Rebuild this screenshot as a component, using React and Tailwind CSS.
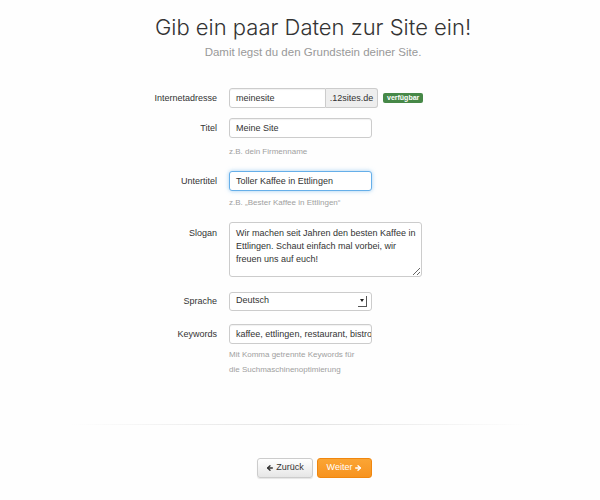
import React from 'react';
import { ArrowLeft, ArrowRight } from 'lucide-react';

const Label = ({ children }) => (
  <div className="w-[217px] shrink-0 text-right text-[9px] leading-[20px] text-[#333]">{children}</div>
);

const Help = ({ children, className = '' }) => (
  <div className={`ml-[229px] text-[8px] text-[#a0a0a0] ${className}`}>{children}</div>
);

const inputCls =
  'h-[20px] rounded-[3px] border border-[#ccc] bg-white px-[6px] text-[9px] leading-[18px] text-[#333] shadow-[inset_0_1px_1px_rgba(0,0,0,0.06)]';

const App = () => {
  return (
    <div className="min-h-[500px] w-[600px] bg-[#fefefe] font-['Liberation_Sans',Arial,sans-serif]">
      <div className="pl-[26px] pt-[12px] text-center">
        <h1 className="font-['Inter',sans-serif] text-[22px] font-light leading-[30px] text-[#333]">
          Gib ein paar Daten zur Site ein!
        </h1>
        <p className="mt-[2px] text-[11.5px] leading-[16px] text-[#999]">
          Damit legst du den Grundstein deiner Site.
        </p>
      </div>

      <div className="mt-[28px]">
        <div className="flex items-center">
          <Label>Internetadresse</Label>
          <div className="ml-[12px] flex">
            <div className={`${inputCls} w-[97px] rounded-r-none`}>meinesite</div>
            <div className="h-[20px] w-[52px] rounded-r-[3px] border border-l-0 border-[#ccc] bg-[#eee] text-center text-[9px] leading-[18px] text-[#333]">
              .12sites.de
            </div>
          </div>
          <span className="ml-[5px] rounded-[2px] bg-[#468847] px-[4px] text-[7px] font-bold leading-[10px] text-white">
            verfügbar
          </span>
        </div>

        <div className="mt-[10px] flex items-center">
          <Label>Titel</Label>
          <div className={`${inputCls} ml-[12px] w-[143px]`}>Meine Site</div>
        </div>
        <Help className="mt-[8px] leading-[12px]">z.B. dein Firmenname</Help>

        <div className="mt-[13px] flex items-center">
          <Label>Untertitel</Label>
          <div className="ml-[12px] h-[20px] w-[143px] rounded-[3px] border border-[#66afe9] bg-white px-[6px] text-[9px] leading-[18px] text-[#333] shadow-[0_0_4px_rgba(102,175,233,0.6)]">
            Toller Kaffee in Ettlingen
          </div>
        </div>
        <Help className="mt-[6px] leading-[12px]">z.B. „Bester Kaffee in Ettlingen“</Help>

        <div className="mt-[13px] flex items-start">
          <Label>
            <span className="leading-[22px]">Slogan</span>
          </Label>
          <textarea
            readOnly
            defaultValue="Wir machen seit Jahren den besten Kaffee in Ettlingen. Schaut einfach mal vorbei, wir freuen uns auf euch!"
            className="ml-[12px] h-[55px] w-[193px] rounded-[3px] border border-[#ccc] bg-white py-[4px] pl-[6px] pr-[1px] text-[9px] leading-[13px] text-[#333] outline-none"
          />
        </div>

        <div className="mt-[14px] flex items-center">
          <Label>Sprache</Label>
          <div className="ml-[12px] flex h-[19px] w-[143px] items-center justify-between rounded-[3px] border border-[#ccc] bg-white pl-[6px] pr-[4px] text-[9px] text-[#333]">
            <span>Deutsch</span>
            <span className="flex h-[11px] w-[9px] items-center justify-center border-b border-r border-[#555]">
              <span className="h-0 w-0 border-l-[2.5px] border-r-[2.5px] border-t-[3px] border-l-transparent border-r-transparent border-t-[#222]" />
            </span>
          </div>
        </div>

        <div className="mt-[13px] flex items-center">
          <Label>Keywords</Label>
          <div className={`${inputCls} ml-[12px] w-[143px] overflow-hidden whitespace-nowrap`}>
            kaffee, ettlingen, restaurant, bistro
          </div>
        </div>
        <Help className="mt-[3px] leading-[15px]">
          Mit Komma getrennte Keywords für
          <br />
          die Suchmaschinenoptimierung
        </Help>
      </div>

      <div className="mx-[70px] mt-[47px] h-px bg-gradient-to-r from-transparent via-[#e2e2e2] to-transparent" />

      <div className="mt-[33px] flex gap-[4px] pl-[257px]">
        <button className="flex h-[20px] w-[56px] items-center justify-center gap-[2px] rounded-[3px] border border-[#ccc] bg-gradient-to-b from-white to-[#e6e6e6] text-[9px] text-[#333] shadow-[0_1px_1px_rgba(0,0,0,0.1)]">
          <ArrowLeft size={8} strokeWidth={4} />
          Zurück
        </button>
        <button className="flex h-[20px] w-[55px] items-center justify-center gap-[2px] rounded-[3px] border border-[#f0870f] bg-gradient-to-b from-[#fba534] to-[#f7931e] text-[9px] text-white">
          Weiter
          <ArrowRight size={8} strokeWidth={4} />
        </button>
      </div>
    </div>
  );
};

export default App;
